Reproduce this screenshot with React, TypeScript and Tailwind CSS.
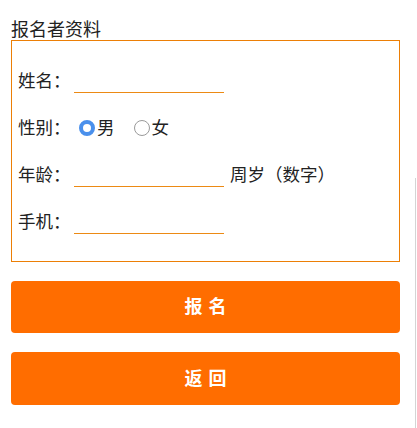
import React, { useState } from 'react';

const font = { fontFamily: '"Noto Sans CJK SC", "Noto Sans", sans-serif' };

const Field: React.FC<{ label: string; children: React.ReactNode }> = ({ label, children }) => (
  <div className="h-[47px] flex items-center">
    <span className="w-[56px] shrink-0">{label}</span>
    {children}
  </div>
);

const LineInput: React.FC = () => (
  <input
    type="text"
    className="w-[150px] h-[24px] border-b border-[#ec8a14] bg-transparent outline-none text-[17px]"
  />
);

const Radio: React.FC<{ checked: boolean }> = ({ checked }) =>
  checked ? (
    <span className="w-[16px] h-[16px] rounded-full border-[4.5px] border-[#4a90ec] bg-white" />
  ) : (
    <span className="w-[16px] h-[16px] rounded-full border border-[#9a9a9a] bg-white" />
  );

export default function App() {
  const [gender, setGender] = useState<'m' | 'f'>('m');

  return (
    <div className="relative w-[417px] h-[428px] bg-white text-[#222] text-[17.5px]" style={font}>
      <div className="pl-[11px] w-[400px]">
        <h2 className="pt-[17px] leading-[23px] text-[18px] font-normal">报名者资料</h2>

        {/* form box */}
        <div className="border border-[#ec7f06] pl-[6px] pt-[16px] pb-[16px]">
          <Field label="姓名：">
            <LineInput />
          </Field>

          <Field label="性别：">
            <label className="flex items-center ml-[5px] cursor-pointer" onClick={() => setGender('m')}>
              <Radio checked={gender === 'm'} />
              <span className="ml-[2px]">男</span>
            </label>
            <label className="flex items-center ml-[19px] cursor-pointer" onClick={() => setGender('f')}>
              <Radio checked={gender === 'f'} />
              <span className="ml-[2px]">女</span>
            </label>
          </Field>

          <Field label="年龄：">
            <LineInput />
            <span className="ml-[6px]">周岁（数字）</span>
          </Field>

          <Field label="手机：">
            <LineInput />
          </Field>
        </div>

        {/* buttons */}
        <button className="mt-[19px] w-full h-[52px] rounded-[4px] bg-[#ff6d00] text-white text-[18px] font-bold tracking-[6px] pl-[6px] pb-[3px]">
          报名
        </button>
        <button className="mt-[19px] w-full h-[53px] rounded-[4px] bg-[#ff6d00] text-white text-[18px] font-bold tracking-[6px] pl-[6px] pb-[3px]">
          返回
        </button>
      </div>

      {/* scrollbar edge */}
      <div className="absolute right-[1px] top-[178px] bottom-0 w-px bg-[#d4d4d4]" />
    </div>
  );
}
